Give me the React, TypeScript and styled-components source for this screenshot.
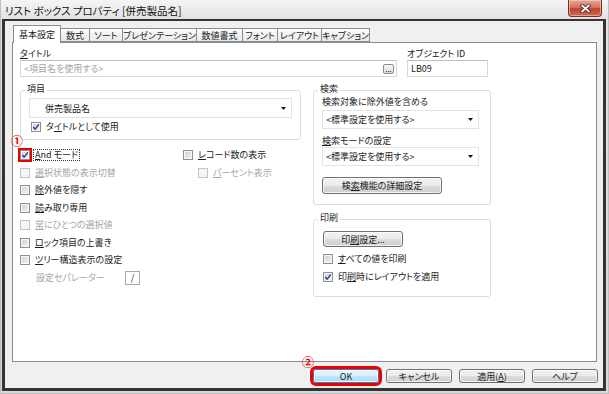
import React from 'react';
import styled, { createGlobalStyle } from 'styled-components';

const GlobalStyle = createGlobalStyle`
  html, body {
    margin: 0;
    padding: 0;
    background: #fff;
  }
  body {
    font-family: 'Noto Sans CJK JP', 'Noto Sans', sans-serif;
    font-feature-settings: 'palt' 1;
  }
  * {
    box-sizing: border-box;
  }
  button {
    font: inherit;
  }
`;

const TABS = [
  { label: '基本設定', w: 48 },
  { label: '数式', w: 30 },
  { label: 'ソート', w: 34 },
  { label: 'プレゼンテーション', w: 75 },
  { label: '数値書式', w: 47 },
  { label: 'フォント', w: 36 },
  { label: 'レイアウト', w: 45 },
  { label: 'キャプション', w: 49 },
];

type CheckProps = {
  checked?: boolean;
  disabled?: boolean;
  indent?: number;
  marked?: boolean;
  focused?: boolean;
  span?: boolean;
  children: React.ReactNode;
};

const Check: React.FC<CheckProps> = ({
  checked,
  disabled,
  indent = 0,
  marked,
  focused,
  span,
  children,
}) => (
  <CheckRow $indent={indent} $disabled={disabled} $span={span}>
    <Box $disabled={disabled} $marked={marked}>
      {checked && (
        <svg width="8" height="8" viewBox="0 0 8 8">
          <path
            d="M1.2 4.1 L3.1 6.2 L6.9 1.4"
            stroke="#24449c"
            strokeWidth="1.5"
            fill="none"
          />
        </svg>
      )}
      {marked && <Badge>①</Badge>}
    </Box>
    <CheckText $focused={focused}>{children}</CheckText>
  </CheckRow>
);

const Arrow = () => (
  <svg width="5" height="3" viewBox="0 0 5 3">
    <polygon points="0,0 5,0 2.5,3" fill="#111" />
  </svg>
);

const App: React.FC = () => {
  return (
    <>
      <GlobalStyle />
      <Window>
        <TitleBar>
          <TitleText>リスト ボックス プロパティ [併売製品名]</TitleText>
          <CloseButton aria-label="閉じる">
            <svg width="11" height="9" viewBox="0 0 11 9">
              <path
                d="M2.2 1.6 L8.8 7.4 M8.8 1.6 L2.2 7.4"
                stroke="#4a2622"
                strokeWidth="3.4"
                strokeLinecap="square"
              />
              <path
                d="M2.2 1.6 L8.8 7.4 M8.8 1.6 L2.2 7.4"
                stroke="#fff"
                strokeWidth="1.8"
                strokeLinecap="square"
              />
            </svg>
          </CloseButton>
        </TitleBar>

        <Client>
          <TabStrip>
            {TABS.map((tab, index) => (
              <Tab key={tab.label} $w={tab.w} $active={index === 0}>
                {tab.label}
              </Tab>
            ))}
          </TabStrip>

          <Panel>
            <TopRow>
              <Field>
                <Caption>
                  <U>タ</U>イトル
                </Caption>
                <TextBox>
                  <Placeholder>&lt;項目名を使用する&gt;</Placeholder>
                  <BrowseButton>...</BrowseButton>
                </TextBox>
              </Field>
              <Field>
                <Caption>オブジェクト ID</Caption>
                <TextBox>LB09</TextBox>
              </Field>
            </TopRow>

            <Columns>
              <Column>
                <GroupBox>
                  <Legend>項目</Legend>
                  <GroupBody $pad="1px 8px 6px 8px" $gap={3}>
                    <Select $h={20} $indent={15}>
                      <span>併売製品名</span>
                      <Arrow />
                    </Select>
                    <Check checked indent={2}>
                      タ<U>イ</U>トルとして使用
                    </Check>
                  </GroupBody>
                </GroupBox>

                <CheckList>
                  <Check checked marked focused>
                    <U>A</U>nd モード
                  </Check>
                  <Check>
                    <U>レ</U>コード数の表示
                  </Check>
                  <Check disabled>
                    <U>選</U>択状態の表示切替
                  </Check>
                  <Check disabled indent={15}>
                    <U>パ</U>ーセント表示
                  </Check>
                  <Check span>
                    <U>除</U>外値を隠す
                  </Check>
                  <Check span>
                    <U>読</U>み取り専用
                  </Check>
                  <Check span disabled>
                    <U>常</U>にひとつの選択値
                  </Check>
                  <Check span>
                    <U>ロ</U>ック項目の上書き
                  </Check>
                  <Check span>
                    <U>ツ</U>リー構造表示の設定
                  </Check>
                  <SeparatorRow>
                    <SeparatorLabel>設定セパレーター</SeparatorLabel>
                    <SeparatorBox>/</SeparatorBox>
                  </SeparatorRow>
                </CheckList>
              </Column>

              <Column>
                <GroupBox>
                  <Legend>検索</Legend>
                  <GroupBody $pad="0 11px 10px 8px" $gap={0}>
                    <Caption $mt={-1}>検索対象に除外値を含める</Caption>
                    <Select $h={19} $indent={3} $mt={3}>
                      <span>&lt;標準設定を使用する&gt;</span>
                      <Arrow />
                    </Select>
                    <Caption $mt={5.5}>
                      <U>検</U>索モードの設定
                    </Caption>
                    <Select $h={19} $indent={3} $mt={1.5}>
                      <span>&lt;標準設定を使用する&gt;</span>
                      <Arrow />
                    </Select>
                    <PushButton $w={120} $h={17} $mt={11}>
                      検<U>索</U>機能の詳細設定
                    </PushButton>
                  </GroupBody>
                </GroupBox>

                <GroupBox $mt={7}>
                  <Legend>印刷</Legend>
                  <GroupBody $pad="5px 9px 13px 9px" $gap={6}>
                    <PushButton $w={80} $h={16}>
                      印<U>刷</U>設定...
                    </PushButton>
                    <Check>
                      <U>す</U>べての値を印刷
                    </Check>
                    <Check checked>
                      印<U>刷</U>時にレイアウトを適用
                    </Check>
                  </GroupBody>
                </GroupBox>
              </Column>
            </Columns>
          </Panel>

          <ButtonRow>
            <PushButton $w={66} $h={14} $default>
              OK
              <Badge $big>②</Badge>
            </PushButton>
            <PushButton $w={66} $h={14}>
              キャンセル
            </PushButton>
            <PushButton $w={66} $h={14}>
              適用(<U>A</U>)
            </PushButton>
            <PushButton $w={66} $h={14}>
              ヘルプ
            </PushButton>
          </ButtonRow>
        </Client>
      </Window>
    </>
  );
};

export default App;

const Window = styled.div`
  width: 609px;
  height: 394px;
  display: flex;
  flex-direction: column;

  background: linear-gradient(#f5f5f5, #e2e2e2 19px, #d9d9d9);
  border: 1px solid #bdbdbd;
  border-top: none;

  font-size: 9px;
  line-height: 11px;
  color: #1b1b1b;
`;

const TitleBar = styled.div`
  height: 19px;
  padding-left: 4px;
  display: flex;
  justify-content: space-between;
  align-items: flex-start;
`;

const TitleText = styled.span`
  padding-top: 4px;
  font-size: 10.5px;
  line-height: 14px;
  color: #111;
`;

const CloseButton = styled.button`
  width: 34px;
  height: 17px;
  margin-right: 6px;
  padding: 0;

  display: flex;
  justify-content: center;
  align-items: center;

  border: 1px solid #7e2f27;
  border-top: none;
  border-radius: 0 0 4px 4px;
  background: linear-gradient(#e6a696, #d37560 45%, #c0422d 55%, #cf6a55);
  box-shadow: inset 0 0 0 1px rgba(255, 220, 210, 0.5);
`;

const Client = styled.div`
  flex: 1;
  margin: 0 2px 2px 1px;
  padding: 4px 6px 5px 7px;

  display: flex;
  flex-direction: column;

  background: #f0f0f0;
  border: 3px solid #343434;
  border-top-width: 2px;
`;

const TabStrip = styled.div`
  height: 17px;
  padding-left: 1px;
  display: flex;
  align-items: flex-end;
`;

const Tab = styled.div<{ $w: number; $active?: boolean }>`
  width: ${(p) => p.$w}px;
  height: ${(p) => (p.$active ? 18 : 14)}px;
  margin-bottom: ${(p) => (p.$active ? -1 : 0)}px;
  & + & {
    margin-left: -1px;
  }

  display: flex;
  justify-content: center;
  align-items: center;
  padding-top: ${(p) => (p.$active ? 0 : 1)}px;

  position: relative;
  z-index: ${(p) => (p.$active ? 2 : 1)};

  white-space: nowrap;
  border: 1px solid #898c95;
  border-bottom: ${(p) => (p.$active ? 'none' : '1px solid #898c95')};
  background: ${(p) =>
    p.$active ? '#fff' : 'linear-gradient(#fdfdfd, #f1f1f1 50%, #ebebeb)'};
`;

const Panel = styled.div`
  flex: 1;
  padding: 5px 8px 0 7px;

  display: flex;
  flex-direction: column;

  background: #fff;
  border: 1px solid #898c95;
`;

const TopRow = styled.div`
  display: grid;
  grid-template-columns: 377px 81px;
  column-gap: 10px;
`;

const Field = styled.div`
  display: flex;
  flex-direction: column;
  gap: 1px;
`;

const Caption = styled.span<{ $mt?: number }>`
  margin-top: ${(p) => p.$mt ?? 0}px;
  line-height: 11px;
  white-space: nowrap;
`;

const U = styled.span`
  text-decoration: underline;
  text-underline-offset: 1px;
`;

const TextBox = styled.div`
  height: 17px;
  padding: 0 2px 0 3px;

  display: flex;
  align-items: center;

  background: #fff;
  border: 1px solid #d3dae1;
  border-top-color: #b9c0c8;
`;

const Placeholder = styled.span`
  color: #a3a3a3;
`;

const BrowseButton = styled.span`
  width: 11px;
  height: 10px;
  margin-left: auto;

  display: flex;
  justify-content: center;
  align-items: flex-end;

  font-size: 8px;
  line-height: 8px;
  border: 1px solid #8d8d8d;
  border-radius: 2px;
  background: linear-gradient(#f6f6f6, #dedede);
`;

const Columns = styled.div`
  margin-top: 6px;
  display: grid;
  grid-template-columns: 281px 178px;
  column-gap: 12px;
  align-items: start;
`;

const Column = styled.div`
  display: flex;
  flex-direction: column;
`;

const GroupBox = styled.fieldset<{ $mt?: number }>`
  margin: ${(p) => p.$mt ?? 0}px 0 0 0;
  padding: 0;
  min-width: 0;

  border: 1px solid #d5dfe5;
  border-radius: 3px;
`;

const Legend = styled.legend`
  margin-left: 4px;
  padding: 0 2px 3px 2px;
  line-height: 11px;
`;

const GroupBody = styled.div<{ $pad: string; $gap: number }>`
  padding: ${(p) => p.$pad};
  display: flex;
  flex-direction: column;
  align-items: flex-start;
  gap: ${(p) => p.$gap}px;
`;

const Select = styled.div<{ $h: number; $indent: number; $mt?: number }>`
  width: 100%;
  height: ${(p) => p.$h}px;
  margin-top: ${(p) => p.$mt ?? 0}px;
  padding: 0 5px 0 ${(p) => p.$indent}px;

  display: flex;
  justify-content: space-between;
  align-items: center;

  background: #fff;
  border: 1px solid #dfe4ea;
`;

const CheckList = styled.div`
  margin-top: 6.25px;
  display: grid;
  grid-template-columns: 163px 1fr;
  grid-auto-rows: 17.5px;
  align-items: center;
`;

const CheckRow = styled.label<{
  $indent: number;
  $disabled?: boolean;
  $span?: boolean;
}>`
  height: 12px;
  padding-left: ${(p) => p.$indent}px;
  grid-column: ${(p) => (p.$span ? '1 / -1' : 'auto')};

  display: flex;
  align-items: center;
  gap: 3px;

  white-space: nowrap;
  color: ${(p) => (p.$disabled ? '#a6a6a6' : '#1b1b1b')};
`;

const Box = styled.span<{ $disabled?: boolean; $marked?: boolean }>`
  width: 10px;
  height: 10px;
  flex: none;
  position: relative;

  display: flex;
  justify-content: center;
  align-items: center;

  border: 1px solid ${(p) => (p.$disabled ? '#c4c4c4' : '#8e8f8f')};
  background: ${(p) =>
    p.$disabled ? '#f5f5f5' : 'linear-gradient(135deg, #cdd0d4, #f4f4f4)'};
  box-shadow: inset 0 0 0 1px #f7f7f7;

  &::after {
    content: '';
    display: ${(p) => (p.$marked ? 'block' : 'none')};
    position: absolute;
    inset: -3px -3px -3px -3px;
    border: 2.5px solid #ee0000;
  }
`;

const CheckText = styled.span<{ $focused?: boolean }>`
  padding: 0 1px;
  line-height: 10px;
  border: 1px dotted ${(p) => (p.$focused ? '#333' : 'transparent')};
`;

const Badge = styled.span<{ $big?: boolean }>`
  position: absolute;
  left: ${(p) => (p.$big ? -12 : -10)}px;
  top: ${(p) => (p.$big ? -14 : -16)}px;

  font-size: 12px;
  line-height: 12px;
  font-weight: 700;
  color: #ee0000;
`;

const SeparatorRow = styled.div`
  grid-column: 1 / -1;
  display: flex;
  align-items: center;
`;

const SeparatorLabel = styled.span`
  width: 105px;
  padding-left: 16px;
  color: #a6a6a6;
`;

const SeparatorBox = styled.span`
  width: 15px;
  height: 14px;

  display: flex;
  justify-content: center;
  align-items: center;

  background: #fff;
  border: 1px solid #a9a9a9;
`;

const PushButton = styled.button<{
  $w: number;
  $h: number;
  $mt?: number;
  $default?: boolean;
}>`
  width: ${(p) => p.$w}px;
  height: ${(p) => p.$h}px;
  margin-top: ${(p) => p.$mt ?? 0}px;
  padding: 0;
  position: relative;

  display: flex;
  justify-content: center;
  align-items: center;

  font-size: 9px;
  line-height: 11px;
  color: #1b1b1b;
  white-space: nowrap;

  border: 1px solid ${(p) => (p.$default ? '#3c7fb1' : '#707070')};
  border-radius: 3px;
  background: ${(p) =>
    p.$default
      ? 'linear-gradient(#eaf6fd, #d9f0fc 50%, #bee6fd 50%, #a7d9f5)'
      : 'linear-gradient(#f2f2f2, #ebebeb 50%, #dddddd 50%, #cfcfcf)'};
  box-shadow: inset 0 0 0 1px rgba(255, 255, 255, 0.7);

  outline: ${(p) => (p.$default ? '3px solid #ee0000' : 'none')};
`;

const ButtonRow = styled.div`
  margin-top: 7px;
  margin-right: -1px;
  display: flex;
  justify-content: flex-end;
  gap: 7px;
`;
